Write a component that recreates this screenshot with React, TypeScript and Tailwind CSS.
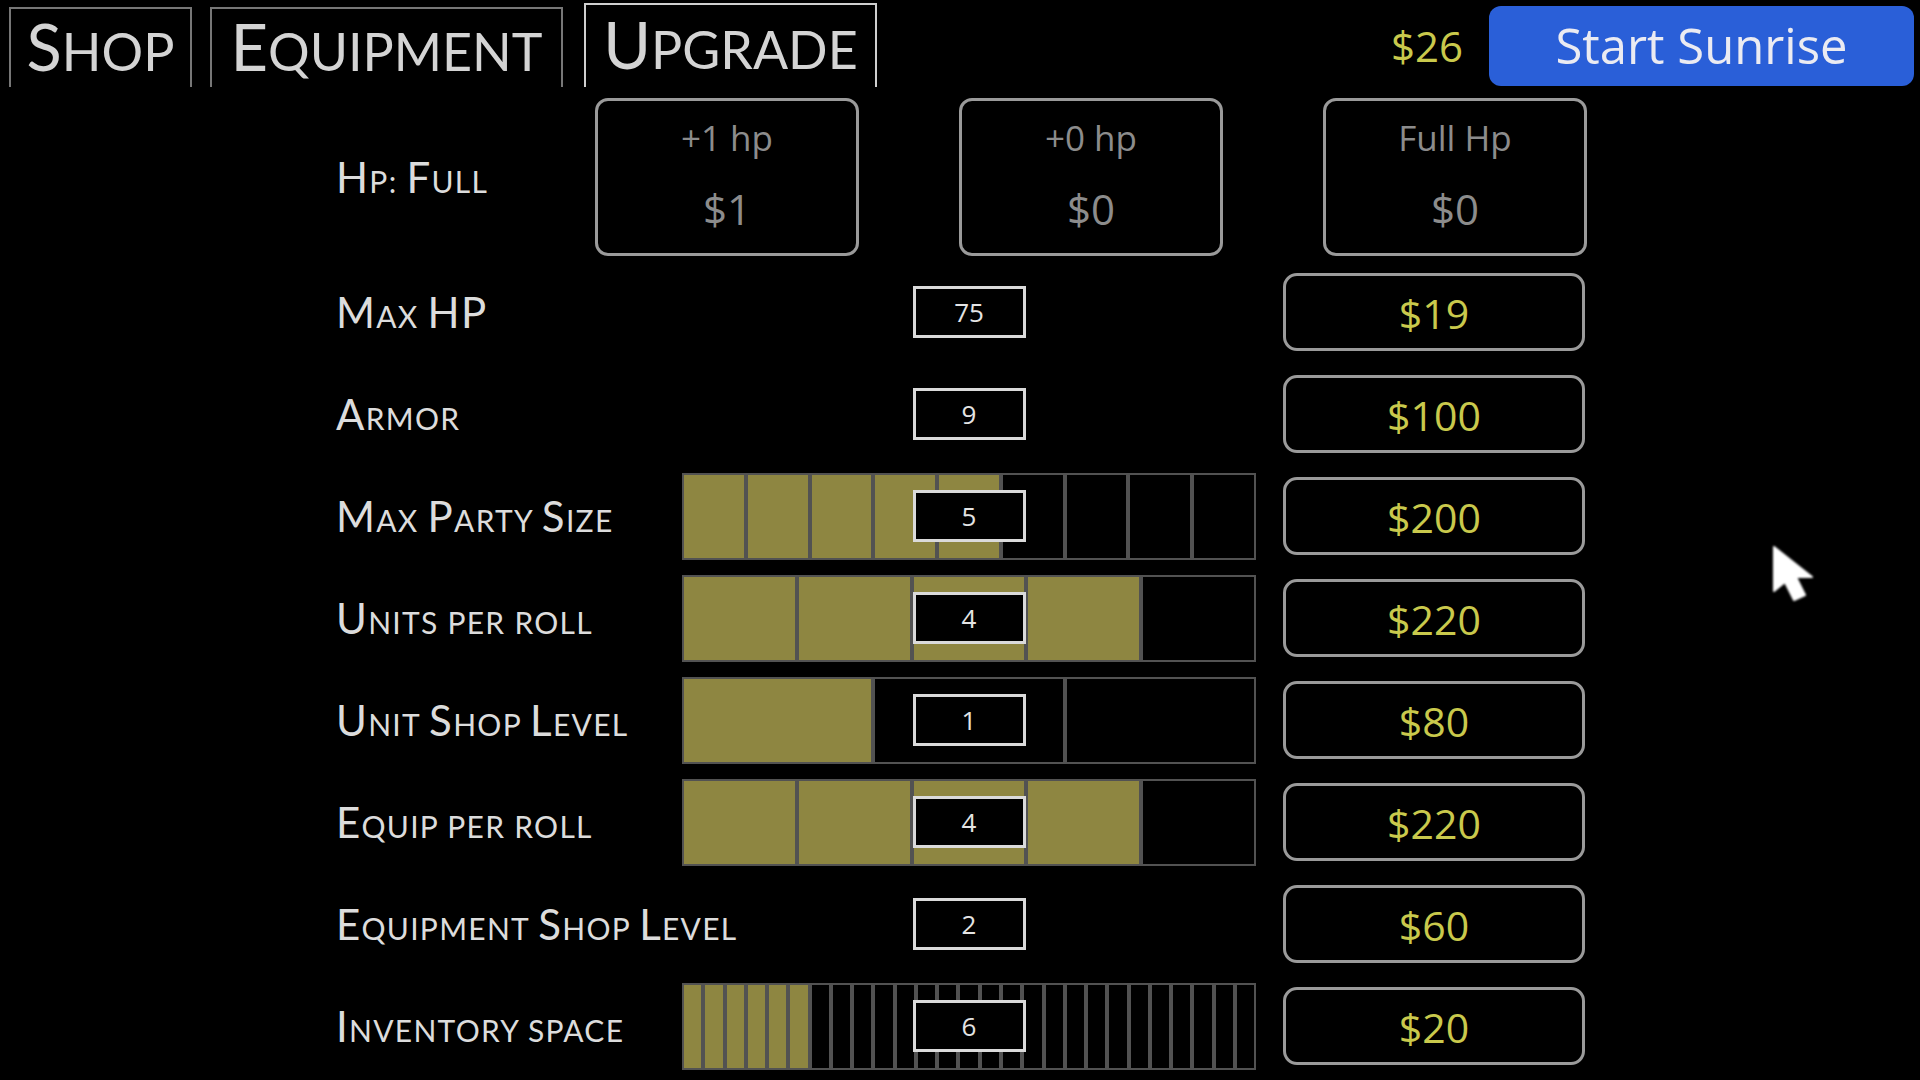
import React from "react";

function SC({ text, big, small }: { text: string; big: string; small: string }) {
  const parts = text.match(/[A-Z]+|[^A-Z]+/g) ?? [];
  return (
    <>
      {parts.map((p, i) =>
        /[A-Z]/.test(p[0]) ? (
          <span key={i} className={big}>
            {p}
          </span>
        ) : (
          <span key={i} className={`${small} uppercase`}>
            {p}
          </span>
        )
      )}
    </>
  );
}

type Row = {
  label: string;
  value: string;
  price: string;
  cells?: number;
  filled?: number;
};

const rows: Row[] = [
  { label: "Max HP", value: "75", price: "$19" },
  { label: "Armor", value: "9", price: "$100" },
  { label: "Max Party Size", value: "5", price: "$200", cells: 9, filled: 5 },
  { label: "Units per roll", value: "4", price: "$220", cells: 5, filled: 4 },
  { label: "Unit Shop Level", value: "1", price: "$80", cells: 3, filled: 1 },
  { label: "Equip per roll", value: "4", price: "$220", cells: 5, filled: 4 },
  { label: "Equipment Shop Level", value: "2", price: "$60" },
  { label: "Inventory space", value: "6", price: "$20", cells: 27, filled: 6 },
];

const hpOptions = [
  { top: "+1 hp", price: "$1" },
  { top: "+0 hp", price: "$0" },
  { top: "Full Hp", price: "$0" },
];

function Tab({ text, active, w }: { text: string; active?: boolean; w: string }) {
  return (
    <div
      className={`${w} flex items-center justify-center border-2 border-b-0 text-[#d4d4d4] leading-none ${
        active ? "h-[84px] border-[#cfcfcf]" : "h-[80px] border-[#777777]"
      }`}
    >
      <span className="-mt-[3px] whitespace-nowrap">
        <SC text={text} big="text-[65px]" small="text-[52px]" />
      </span>
    </div>
  );
}

function Cursor() {
  return (
    <svg
      className="absolute left-[1770px] top-[544px] blur-[0.8px]"
      width="48"
      height="60"
      viewBox="0 0 48 60"
    >
      <path
        d="M4 3 L4 47 L15 38 L24 56 L35 51 L26 33 L42 33 Z"
        fill="#ffffff"
        stroke="#ffffff"
        strokeWidth="2"
        strokeLinejoin="round"
      />
    </svg>
  );
}

export default function App() {
  return (
    <div
      className="relative w-[1920px] h-[1080px] overflow-hidden bg-black text-[#dcdcdc]"
      style={{ fontFamily: "Lato, 'Open Sans', sans-serif" }}
    >
      {/* header */}
      <div className="flex h-[87px] items-end pl-[9px] pr-[6px]">
        <Tab text="Shop" w="w-[183px]" />
        <div className="ml-[18px]">
          <Tab text="Equipment" w="w-[353px]" />
        </div>
        <div className="ml-[21px]">
          <Tab text="Upgrade" w="w-[293px]" active />
        </div>
        <div className="ml-auto flex h-[87px] items-start pt-[6px]">
          <span className="mt-[16px] mr-[26px] font-['Open_Sans',sans-serif] text-[42px] leading-[48px] text-[#c9c94c]">
            $26
          </span>
          <div className="flex h-[80px] w-[425px] items-center justify-center rounded-[12px] bg-[#2a5fd8] font-['Open_Sans',sans-serif] text-[49px] text-[#ebebf2]">
            Start Sunrise
          </div>
        </div>
      </div>

      {/* HP row */}
      <div className="mt-[11px] flex h-[158px] items-center pl-[336px]">
        <div className="w-[259px] whitespace-nowrap leading-none tracking-[0.08em]">
          <SC text="Hp: Full" big="text-[42px]" small="text-[30px]" />
        </div>
        <div className="flex gap-[100px]">
          {hpOptions.map((o, i) => (
            <div
              key={i}
              className="flex h-[158px] w-[264px] flex-col items-center rounded-[13px] border-[3px] border-[#9a9a9a] font-['Open_Sans',sans-serif] text-[#8c8c8c]"
            >
              <span className="mt-[14px] text-[35px] leading-[46px]">{o.top}</span>
              <span className="mt-[22px] text-[42px] leading-[52px]">{o.price}</span>
            </div>
          ))}
        </div>
      </div>

      {/* upgrade rows */}
      <div className="mt-[5px] flex flex-col">
        {rows.map((r, i) => (
          <div key={i} className="flex h-[102px] items-center pl-[336px]">
            <div className="w-[346px] whitespace-nowrap leading-none tracking-[0.08em]">
              <SC text={r.label} big="text-[42px]" small="text-[30px]" />
            </div>
            <div className="relative flex h-[87px] w-[574px] items-center justify-center">
              {r.cells ? (
                <div className="absolute inset-0 flex">
                  {Array.from({ length: r.cells }).map((_, c) => (
                    <div
                      key={c}
                      className={`flex-1 border-2 border-[#525252] ${
                        c < (r.filled ?? 0) ? "bg-[#8e8641]" : "bg-black"
                      }`}
                    />
                  ))}
                </div>
              ) : null}
              <div className="relative flex h-[52px] w-[113px] items-center justify-center border-[3px] border-[#dadada] bg-black font-['Open_Sans',sans-serif] text-[26px] text-[#e4e4e4]">
                {r.value}
              </div>
            </div>
            <div className="ml-[27px] flex h-[78px] w-[302px] items-center justify-center rounded-[14px] border-[3px] border-[#9a9a9a] pt-[3px] font-['Open_Sans',sans-serif] text-[41px] text-[#c9c94c]">
              {r.price}
            </div>
          </div>
        ))}
      </div>

      <Cursor />
    </div>
  );
}
